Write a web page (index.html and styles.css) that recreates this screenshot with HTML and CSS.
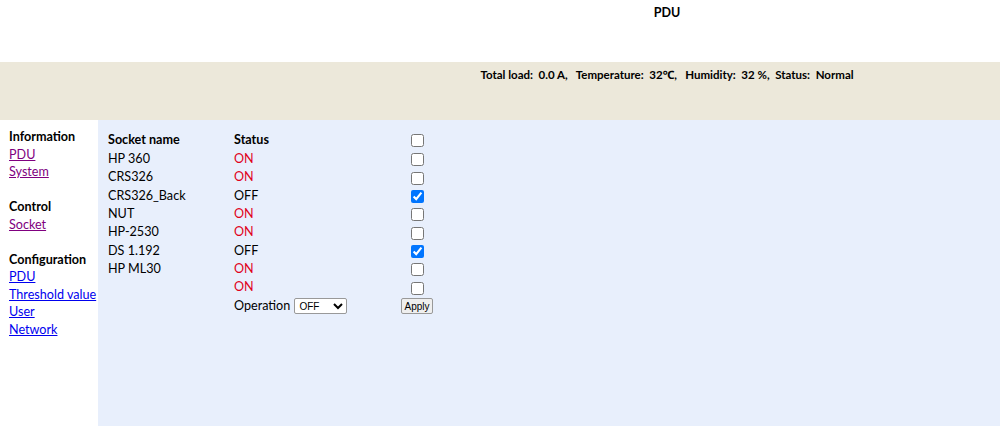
FILE: index.html
```html
<!DOCTYPE html>
<html lang="en">
  <head>
    <meta charset="UTF-8" />
    <title>PDU</title>
    <link rel="stylesheet" href="styles.css">
  </head>
  <body>
    <div class="top">
      <div class="title">PDU</div>
    </div>
    <div class="statusbar">
      <div class="status-text">Total load:&nbsp;&nbsp;0.0 A,&nbsp;&nbsp;&nbsp;Temperature:&nbsp;&nbsp;32℃,&nbsp;&nbsp;&nbsp;Humidity:&nbsp;&nbsp;32 %,&nbsp;&nbsp;Status:&nbsp;&nbsp;Normal</div>
    </div>
    <div class="page">
      <div class="nav">
        <div class="group">
          <div class="group-title">Information</div>
          <a href="#" class="visited">PDU</a>
          <a href="#" class="visited">System</a>
        </div>
        <div class="group">
          <div class="group-title">Control</div>
          <a href="#" class="visited">Socket</a>
        </div>
        <div class="group">
          <div class="group-title">Configuration</div>
          <a href="#">PDU</a>
          <a href="#">Threshold value</a>
          <a href="#">User</a>
          <a href="#">Network</a>
        </div>
      </div>
      <div class="main">
        <table class="sockets">
          <tr class="head">
            <th class="c-name">Socket name</th>
            <th class="c-status">Status</th>
            <th class="c-check"><input type="checkbox" /></th>
          </tr>
          <tr><td>HP 360</td><td class="on">ON</td><td class="c-check"><input type="checkbox" /></td></tr>
          <tr><td>CRS326</td><td class="on">ON</td><td class="c-check"><input type="checkbox" /></td></tr>
          <tr><td>CRS326_Back</td><td>OFF</td><td class="c-check"><input type="checkbox" checked /></td></tr>
          <tr><td>NUT</td><td class="on">ON</td><td class="c-check"><input type="checkbox" /></td></tr>
          <tr><td>HP-2530</td><td class="on">ON</td><td class="c-check"><input type="checkbox" /></td></tr>
          <tr><td>DS 1.192</td><td>OFF</td><td class="c-check"><input type="checkbox" checked /></td></tr>
          <tr><td>HP ML30</td><td class="on">ON</td><td class="c-check"><input type="checkbox" /></td></tr>
          <tr><td></td><td class="on">ON</td><td class="c-check"><input type="checkbox" /></td></tr>
          <tr>
            <td></td>
            <td>Operation
              <select class="op">
                <option>OFF</option>
                <option>ON</option>
              </select>
            </td>
            <td class="c-check"><button class="apply">Apply</button></td>
          </tr>
        </table>
      </div>
    </div>
  </body>
</html>
```

FILE: styles.css
```css
:root {
  --beige: #ece8da;
  --blue: #e8effc;
  --on-color: #e00020;
}

body {
  margin: 0;
  padding: 0;
  font-family: Lato, "Noto Sans", sans-serif;
  font-size: 12.6px;
  color: #000;
  background: #fff;
  height: 426px;
  display: flex;
  flex-direction: column;
  overflow: hidden;
}

.top {
  height: 62px;
  padding-left: 334px;
  text-align: center;
}

.title {
  font-weight: bold;
  font-size: 12.5px;
  padding-top: 5px;
}

.statusbar {
  height: 58px;
  background-color: var(--beige);
  padding-left: 334px;
  text-align: center;
}

.status-text {
  font-weight: bold;
  font-size: 11.5px;
  padding-top: 5px;
}

.page {
  flex: 1;
  display: flex;
}

.nav {
  width: 89px;
  padding: 8px 0 0 9px;
  line-height: 17.5px;
  white-space: nowrap;
}

.group {
  display: flex;
  flex-direction: column;
  align-items: flex-start;
  margin-bottom: 17.5px;
}

.group-title {
  font-weight: bold;
}

.nav a {
  color: #0000ee;
}

.nav a.visited {
  color: #800080;
}

.main {
  flex: 1;
  background-color: var(--blue);
  padding: 10px 0 0 10px;
}

.sockets {
  border-collapse: collapse;
  table-layout: fixed;
  width: 326px;
}

.sockets th,
.sockets td {
  padding: 0;
  text-align: left;
  line-height: 18.33px;
  height: 18.33px;
  vertical-align: middle;
  white-space: nowrap;
}

.sockets .head th {
  height: 20px;
}

.c-name {
  width: 126px;
}

.c-status {
  width: 166px;
}

.sockets .c-check {
  width: 34px;
  text-align: center;
}

.c-check input {
  margin: 0;
  width: 13px;
  height: 13px;
  vertical-align: middle;
}

.on {
  color: var(--on-color);
}

.op {
  width: 53px;
  height: 16px;
  font-size: 10px;
  padding: 0;
  margin-left: 1px;
  vertical-align: middle;
  border: 1px solid #999;
  border-radius: 2px;
  background: #fff;
}

.apply {
  font-size: 10px;
  height: 16px;
  padding: 0 2px;
  vertical-align: middle;
  border: 1px solid #999;
  border-radius: 2px;
  background: #efefef;
}
```
